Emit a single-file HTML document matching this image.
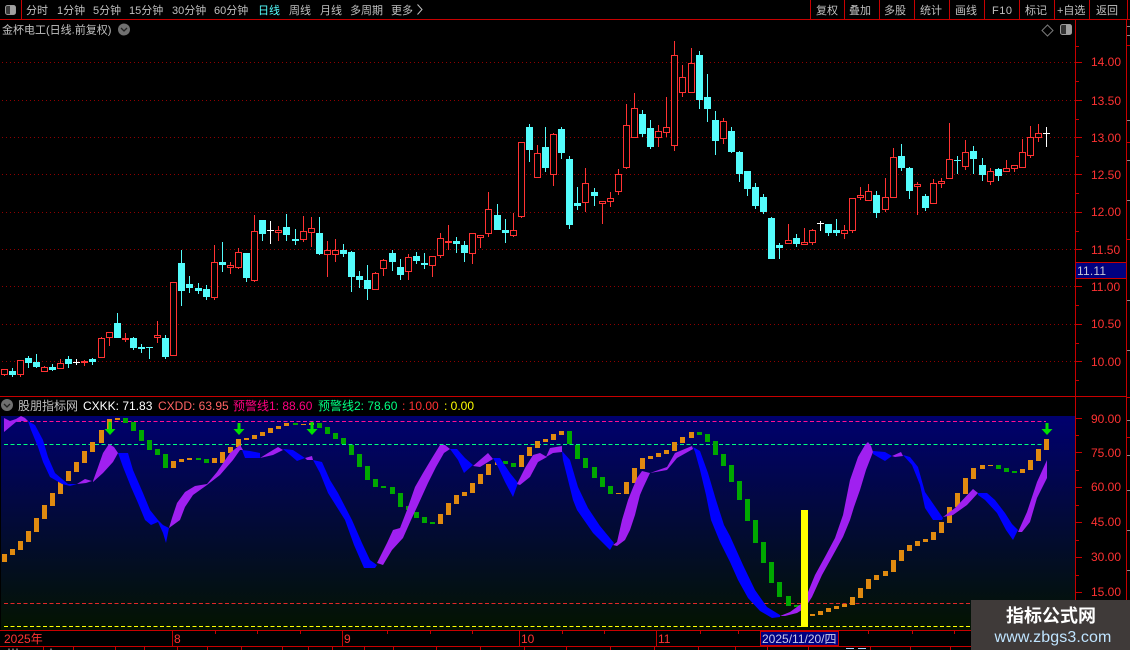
<!DOCTYPE html>
<html lang="zh">
<head>
<meta charset="utf-8">
<title>金杯电工</title>
<style>
html,body{margin:0;padding:0;background:#000;width:1130px;height:650px;overflow:hidden}
svg{display:block}
text{font-family:"Liberation Sans","WenQuanYi Zen Hei","Noto Sans CJK SC",sans-serif;font-size:12px}
.g{fill:#c0c0c0}
.t text{font-size:11px}
.r{fill:#ff3232}
</style>
</head>
<body>
<svg width="1130" height="650" viewBox="0 0 1130 650" xmlns="http://www.w3.org/2000/svg">
<defs>
<linearGradient id="bg" x1="0" y1="0" x2="0" y2="1"><stop offset="0" stop-color="#00006e"/><stop offset="1" stop-color="#041400"/></linearGradient>
</defs>
<rect width="1130" height="650" fill="#000"/>

<!-- top bar -->
<g class="g t">
<text x="26" y="14">分时</text>
<text x="57" y="14">1分钟</text>
<text x="93" y="14">5分钟</text>
<text x="129" y="14">15分钟</text>
<text x="172" y="14">30分钟</text>
<text x="214" y="14">60分钟</text>
<text x="258" y="14" style="fill:#54fcfc">日线</text>
<text x="289" y="14">周线</text>
<text x="320" y="14">月线</text>
<text x="350" y="14">多周期</text>
<text x="391" y="14">更多</text>
<text x="816" y="14">复权</text>
<text x="849" y="14">叠加</text>
<text x="884" y="14">多股</text>
<text x="920" y="14">统计</text>
<text x="955" y="14">画线</text>
<text x="992" y="14" style="letter-spacing:.5px">F10</text>
<text x="1025" y="14">标记</text>
<text x="1057" y="14">+自选</text>
<text x="1096" y="14">返回</text>
<text x="2" y="33.5">金杯电工(日线.前复权)</text>
</g>
<path d="M417.5 4.5L422 9.5L417.5 14.5" fill="none" stroke="#c0c0c0"/>
<g fill="none" stroke="#c80000">
<path d="M21.5 0V19M810.5 0V19M844.5 0V19M879.5 0V19M914.5 0V19M949.5 0V19M984.5 0V19M1019.5 0V19M1054.5 0V19M1089.5 0V19M1127.5 0V19"/>
<path d="M0 19.5H1130M0 396.5H1127M0 630.5H1076M0 646.5H1130"/>
<path d="M1075.5 20V650M1126.5 20V650"/>
<path d="M172.5 631V646M342.5 631V646M519.5 631V646M656.5 631V646"/>
</g>
<!-- layout icons -->
<rect x="5.5" y="5.5" width="10" height="9" rx="2" fill="#3a3a3a" stroke="#9a9a9a"/>
<rect x="10" y="6" width="5" height="8" fill="#a0a0a0"/>
<rect x="1060.5" y="24.5" width="11" height="10" rx="2" fill="#333" stroke="#9a9a9a"/>
<rect x="1066" y="25" width="5" height="9" fill="#a0a0a0"/>
<circle cx="124" cy="29.5" r="6" fill="#707070"/>
<path d="M121 28l3 3 3-3" fill="none" stroke="#222" stroke-width="1.3"/>
<path d="M1047.5 25L1053 30.5L1047.5 36L1042 30.5Z" fill="none" stroke="#7a7a7a"/>

<!-- price grid -->
<g stroke="#900000" stroke-dasharray="1 3" fill="none">
<path d="M2 62.5H1075M2 100.5H1075M2 137.5H1075M2 174.5H1075M2 212.5H1075M2 249.5H1075M2 286.5H1075M2 324.5H1075M2 361.5H1075"/>
</g>

<!-- candles: red wicks -->
<path fill="none" stroke="#ff3232" d="M4.5 369V376M20.5 360V377M44.5 366V372M60.5 359V368M84.5 360V366M101.5 337V357M109.5 332V346M125.5 333V342M157.5 321V343M173.5 282V355M214.5 245V300M230.5 262V274M238.5 248V269M254.5 215V282M278.5 226V241M303.5 216V242M311.5 217V247M327.5 241V277M335.5 239V262M375.5 272V289M383.5 259V276M408.5 254V280M432.5 256V277M440.5 233V258M448.5 225V250M472.5 233V264M480.5 235V248M488.5 192V237M513.5 213V237M521.5 142V218M537.5 145V177M553.5 133V186M585.5 168V212M602.5 201V224M610.5 192V207M618.5 169V195M626.5 104V169M634.5 93V137M658.5 125V147M666.5 97V137M674.5 41V151M682.5 65V97M691.5 48V92M723.5 118V144M788.5 224V243M804.5 228V244M812.5 229V245M844.5 225V239M852.5 198V233M860.5 187V200M868.5 184V200M885.5 178V212M893.5 148V197M917.5 182V215M933.5 179V203M941.5 178V188M949.5 123V178M965.5 140V170M990.5 168V185M1006.5 160V171M1014.5 165V172M1022.5 139V167M1030.5 126V158M1038.5 124V142"/>
<!-- candles: red bodies -->
<path fill="#000" stroke="#ff3232" d="M1.5 369.5h6V374.5h-6zM17.5 360.5h6V374.5h-6zM41.5 367.5h6V371.5h-6zM57.5 363.5h6V368.5h-6zM98.5 338.5h6V357.5h-6zM106.5 332.5h6V337.5h-6zM154.5 335.5h6V337.5h-6zM170.5 282.5h6V355.5h-6zM211.5 262.5h6V297.5h-6zM227.5 265.5h6V267.5h-6zM235.5 252.5h6V267.5h-6zM251.5 231.5h6V280.5h-6zM275.5 230.5h6V232.5h-6zM300.5 231.5h6V239.5h-6zM308.5 228.5h6V232.5h-6zM324.5 250.5h6V254.5h-6zM332.5 250.5h6V254.5h-6zM372.5 273.5h6V289.5h-6zM380.5 260.5h6V268.5h-6zM405.5 257.5h6V271.5h-6zM429.5 256.5h6V265.5h-6zM437.5 238.5h6V255.5h-6zM469.5 233.5h6V253.5h-6zM477.5 235.5h6V237.5h-6zM485.5 209.5h6V233.5h-6zM510.5 230.5h6V235.5h-6zM518.5 142.5h6V216.5h-6zM534.5 153.5h6V177.5h-6zM550.5 134.5h6V174.5h-6zM582.5 183.5h6V202.5h-6zM599.5 201.5h6V203.5h-6zM607.5 198.5h6V201.5h-6zM615.5 174.5h6V191.5h-6zM623.5 125.5h6V167.5h-6zM631.5 108.5h6V137.5h-6zM655.5 131.5h6V137.5h-6zM663.5 127.5h6V132.5h-6zM671.5 55.5h6V145.5h-6zM679.5 77.5h6V92.5h-6zM688.5 63.5h6V92.5h-6zM720.5 121.5h6V138.5h-6zM785.5 240.5h6V243.5h-6zM801.5 242.5h6V244.5h-6zM809.5 230.5h6V242.5h-6zM841.5 230.5h6V233.5h-6zM849.5 198.5h6V230.5h-6zM857.5 195.5h6V197.5h-6zM865.5 191.5h6V200.5h-6zM882.5 197.5h6V209.5h-6zM890.5 157.5h6V197.5h-6zM914.5 184.5h6V186.5h-6zM930.5 183.5h6V203.5h-6zM938.5 181.5h6V183.5h-6zM946.5 159.5h6V178.5h-6zM962.5 152.5h6V166.5h-6zM987.5 171.5h6V181.5h-6zM1003.5 168.5h6V171.5h-6zM1011.5 165.5h6V168.5h-6zM1019.5 152.5h6V167.5h-6zM1027.5 137.5h6V155.5h-6zM1035.5 133.5h6V137.5h-6z"/>
<path fill="none" stroke="#ff3232" stroke-width="7" d="M84.5 361V363M125.5 338V340M448.5 241V243"/>
<!-- candles: cyan wicks -->
<path fill="none" stroke="#54fcfc" d="M12.5 368V377M28.5 356V368M36.5 354V368M52.5 364V371M68.5 356V368M92.5 358V365M117.5 313V338M133.5 337V350M141.5 344V353M149.5 347V359M165.5 335V359M181.5 250V306M189.5 276V293M198.5 283V294M206.5 285V300M222.5 242V272M246.5 253V282M262.5 220V241M286.5 214V241M295.5 229V245M319.5 217V255M343.5 244V257M351.5 251V292M359.5 271V288M367.5 265V300M392.5 250V271M400.5 259V280M416.5 252V264M424.5 253V269M456.5 237V253M464.5 241V262M497.5 204V230M505.5 219V243M529.5 124V162M545.5 127V172M561.5 127V159M569.5 156V229M577.5 187V210M594.5 188V206M642.5 110V137M650.5 120V149M699.5 51V109M707.5 74V122M715.5 111V155M731.5 127V153M739.5 151V182M747.5 171V196M755.5 183V209M763.5 194V214M771.5 217V259M779.5 243V259M796.5 234V247M828.5 224V236M836.5 219V236M876.5 191V218M901.5 144V171M909.5 167V199M925.5 194V211M957.5 156V174M973.5 146V174M982.5 158V181M998.5 168V181"/>
<!-- candles: cyan bodies -->
<path fill="none" stroke="#54fcfc" stroke-width="7" d="M12.5 371V375M28.5 358V363M36.5 362V367M52.5 367V370M68.5 359V364M92.5 359V362M117.5 323V338M133.5 338V348M141.5 347V349M149.5 347V348M165.5 338V357M181.5 263V291M189.5 284V288M198.5 288V291M206.5 289V297M222.5 262V265M246.5 253V278M262.5 220V234M286.5 227V235M295.5 239V241M319.5 233V254M343.5 250V254M351.5 252V277M359.5 276V280M367.5 280V289M392.5 253V262M400.5 267V275M416.5 256V261M424.5 263V265M456.5 241V244M464.5 245V253M497.5 215V230M505.5 230V233M529.5 127V150M545.5 147V168M561.5 129V153M569.5 159V225M577.5 203V206M594.5 192V196M642.5 114V134M650.5 128V147M699.5 55V100M707.5 97V109M715.5 120V141M731.5 131V152M739.5 152V174M747.5 171V189M755.5 187V206M763.5 197V212M771.5 218V259M779.5 245V248M796.5 238V244M828.5 224V233M836.5 230V233M876.5 195V213M901.5 156V168M909.5 168V191M925.5 196V208M957.5 160V161M973.5 151V159M982.5 165V175M998.5 169V176"/>
<!-- candles: white doji -->
<path fill="none" stroke="#fff" d="M76.5 359V365M73 362.5H80M270.5 221V244M267 230.5H274M820.5 221V231M817 223.5H824M1046.5 127V147M1043 133.5H1050"/>

<!-- price axis -->
<g fill="none" stroke="#c80000">
<path d="M1076 62.5H1082M1076 100.5H1082M1076 137.5H1082M1076 174.5H1082M1076 212.5H1082M1076 249.5H1082M1076 286.5H1082M1076 324.5H1082M1076 361.5H1082"/>
<path d="M1076 81.5H1079M1076 119.5H1079M1076 156.5H1079M1076 193.5H1079M1076 231.5H1079M1076 305.5H1079M1076 343.5H1079M1076 380.5H1079M1076 46.5H1079"/>
<path d="M1127 45.5H1130M1127 142.5H1130M1127 239.5H1130M1127 397.5H1130M1127 437.5H1130"/>
</g>
<path fill="none" stroke="#8a8a8a" d="M1127 26.5H1130M1127 35.5H1130M1127 120.5H1130M1127 160.5H1130M1127 200.5H1130M1127 300.5H1130M1127 350.5H1130M1127 420.5H1130M1127 455.5H1130M1127 490.5H1130M1127 530.5H1130M1127 570.5H1130"/>
<g class="r">
<text x="1091" y="66">14.00</text>
<text x="1091" y="105">13.50</text>
<text x="1091" y="142">13.00</text>
<text x="1091" y="179">12.50</text>
<text x="1091" y="216">12.00</text>
<text x="1091" y="254">11.50</text>
<text x="1091" y="291">11.00</text>
<text x="1091" y="328">10.50</text>
<text x="1091" y="366">10.00</text>
</g>
<rect x="1075.5" y="262.5" width="51" height="16" fill="#000080" stroke="#c80000"/>
<text x="1077" y="275" style="fill:#c8c8d8;letter-spacing:.2px">11.11</text>

<!-- indicator header -->
<circle cx="7" cy="405" r="6" fill="#707070"/>
<path d="M4 404l3 3 3-3" fill="none" stroke="#222" stroke-width="1.3"/>
<text x="18" y="410" class="g">股朋指标网</text>
<text x="83" y="410" style="fill:#fff">CXKK: 71.83</text>
<text x="158" y="410" style="fill:#ff6464">CXDD: 63.95</text>
<text x="233" y="410" style="fill:#ff0080">预警线1: 88.60</text>
<text x="318" y="410" style="fill:#00ff80">预警线2: 78.60</text>
<text x="402" y="410" style="fill:#ff3232">: 10.00</text>
<text x="444" y="410" style="fill:#ffff00">: 0.00</text>

<!-- indicator panel -->
<rect x="1" y="416" width="1074" height="214" fill="url(#bg)"/>
<g fill="none" stroke-dasharray="4 2.5">
<path stroke="#ff1090" d="M4 421.5H1046"/>
<path stroke="#00ff80" d="M4 444.5H1046"/>
<path stroke="#e02828" d="M4 603.5H1075"/>
<path stroke="#ffff00" d="M4 626.5H1075"/>
</g>

<!-- indicator bars -->
<path fill="none" stroke="#e08a10" stroke-width="5" d="M4.5 554V562M12.5 549V555M20.5 541V550M28.5 531V542M36.5 518V532M44.5 505V519M52.5 493V506M60.5 481V494M68.5 471V481M76.5 462V472M84.5 451V463M92.5 442V452M101.5 430V443M109.5 419V430M117.5 418V420M173.5 461V468M181.5 459V462M189.5 458V460M214.5 458V463M222.5 452V463M230.5 447V453M238.5 439V447M246.5 438V440M254.5 435V439M262.5 432V436M270.5 428V433M278.5 426V429M286.5 423V426M303.5 424V425M311.5 423V425M440.5 514V524M448.5 503V515M456.5 495V504M464.5 492V496M472.5 483V493M480.5 474V484M488.5 464V475M497.5 462V465M521.5 455V467M529.5 447V456M537.5 441V448M545.5 439V442M553.5 434V440M561.5 431V435M618.5 493V494M626.5 482V494M634.5 468V483M642.5 458V469M650.5 456V459M658.5 453V457M666.5 450V454M674.5 442V451M682.5 437V443M691.5 432V438M812.5 614V616M820.5 611V615M828.5 608V612M836.5 606V609M844.5 604V607M852.5 597V605M860.5 588V598M868.5 579V589M876.5 575V580M885.5 571V576M893.5 560V572M901.5 550V561M909.5 545V551M917.5 541V546M925.5 539V542M933.5 532V540M941.5 522V533M949.5 507V523M957.5 493V507M965.5 478V494M973.5 468V479M982.5 465V469M990.5 465V466M1022.5 469V473M1030.5 460V470M1038.5 449V461M1046.5 439V450"/>
<path fill="none" stroke="#00a800" stroke-width="5" d="M125.5 418V423M133.5 422V431M141.5 430V441M149.5 440V450M157.5 449V455M165.5 454V468M198.5 458V460M206.5 459V463M295.5 423V425M319.5 423V428M327.5 427V434M335.5 433V439M343.5 438V444M351.5 445V455M359.5 454V467M367.5 466V480M375.5 479V487M383.5 486V488M392.5 487V494M400.5 493V507M408.5 506V510M416.5 512V518M424.5 517V523M432.5 522V524M505.5 461V464M513.5 463V467M569.5 431V444M577.5 445V459M585.5 458V468M594.5 467V478M602.5 477V487M610.5 486V494M699.5 432V435M707.5 434V442M715.5 441V455M723.5 454V466M731.5 465V482M739.5 481V500M747.5 499V521M755.5 520V543M763.5 542V563M771.5 562V583M779.5 582V597M788.5 596V606M796.5 605V607M998.5 465V469M1006.5 468V472M1014.5 471V473"/>

<!-- ribbons: blue -->
<g fill="#0000ff">
<path d="M28 421L35 425L43 440L48 457L55 473L68 484L77 484L70 486L62 484L50 477L43 462L38 447L31 430Z"/>
<path d="M118 453L128 453L133 470L143 493L150 510L158 520L163 525L169 528L166 543L163 533L158 522L151 525L145 520L138 503L131 487L123 467Z"/>
<path d="M242 450L250 451L260 453L260 458L245 458Z"/>
<path d="M283 449L293 450L305 458L297 461L290 455Z"/>
<path d="M313 460L322 462L330 480L338 493L352 520L362 543L370 560L377 565L375 568L364 568L354 545L345 520L328 493L320 473Z"/>
<path d="M450 449L457 449L465 458L473 465L464 473L458 460Z"/>
<path d="M493 458L500 458L510 473L518 483L513 497L505 482L498 467Z"/>
<path d="M562 451L570 460L578 487L588 508L600 526L614 543L610 550L593 533L577 510L573 500L568 480L563 460Z"/>
<path d="M693 447L700 451L708 473L716 500L724 525L730 536L743 565L755 590L767 607L780 615L780 617L772 618L760 611L748 598L738 580L730 562L720 542L711 520L706 495L700 470L695 452Z"/>
<path d="M873 451L885 452L892 456L885 461L878 457L873 454Z"/>
<path d="M903 455L910 457L918 467L925 492L943 518L942 520L933 520L925 508L920 485L912 465Z"/>
<path d="M978 493L987 493L995 500L1005 513L1012 524L1018 530L1013 540L1006 530L997 513L985 500L978 495Z"/>
</g>
<!-- ribbons: purple -->
<g fill="#a020f0">
<path d="M4 418L10 421L16 419L21 416L25 418L28 421L22 421L16 422L4 432Z"/>
<path d="M77 484L85 479L92 481L86 483Z"/>
<path d="M93 481L97 470L103 453L109 444L114 447L118 453L113 462L103 473L93 482Z"/>
<path d="M169 528L172 518L177 503L185 492L195 486L207 484L217 472L230 453L240 445L243 450L240 450L233 460L220 475L207 485L193 495L185 507L180 520Z"/>
<path d="M260 458L268 453L278 447L283 450L273 455Z"/>
<path d="M305 458L312 456L313 460L307 460Z"/>
<path d="M377 563L387 543L393 530L400 528L407 510L415 487L423 473L432 458L440 445L445 445L450 449L444 453L436 467L428 483L418 505L411 520L403 538L392 550L383 565Z"/>
<path d="M473 466L488 453L493 459L480 467Z"/>
<path d="M517 484L525 468L533 455L540 453L547 457L538 462L530 477L520 485Z"/>
<path d="M546 457L550 448L562 446L562 452L553 453Z"/>
<path d="M613 545L617 542L622 520L628 500L632 490L637 478L642 471L650 473L643 488L640 495L635 515L630 530L625 540L617 546Z"/>
<path d="M650 473L667 467L675 453L692 446L693 449L677 458L667 470Z"/>
<path d="M780 616L790 612L801 604L808 592L815 575L826 555L835 538L843 515L850 480L858 457L865 445L868 442L871 446L873 452L866 470L860 490L854 507L850 520L843 537L832 557L822 575L812 597L805 608L797 613L785 616Z"/>
<path d="M892 456L901 452L903 456L895 457Z"/>
<path d="M943 517L955 508L973 489L978 493L967 505L953 515Z"/>
<path d="M1018 532L1027 512L1037 482L1047 460L1047 478L1037 498L1030 522L1022 532Z"/>
</g>

<!-- yellow bar -->
<rect x="801" y="510" width="7" height="117" fill="#ffff00"/>

<!-- arrows -->
<g fill="#00e000">
<path d="M108.5 422H111.5V429H115.5L110 435L104.5 429H108.5Z"/>
<path d="M237.5 423H240.5V429H244.5L239 435L233.5 429H237.5Z"/>
<path d="M310.5 422H313.5V429H317.5L312 435L306.5 429H310.5Z"/>
<path d="M1045.5 423H1048.5V429H1052.5L1047 435L1041.5 429H1045.5Z"/>
</g>

<!-- indicator axis -->
<g fill="none" stroke="#c80000">
<path d="M1076 418.5H1082M1076 452.5H1082M1076 487.5H1082M1076 522.5H1082M1076 557.5H1082M1076 592.5H1082"/>
<path d="M1076 435.5H1079M1076 470.5H1079M1076 505.5H1079M1076 540.5H1079M1076 575.5H1079M1076 610.5H1079"/>
</g>
<g class="r">
<text x="1091" y="423">90.00</text>
<text x="1091" y="457">75.00</text>
<text x="1091" y="491">60.00</text>
<text x="1091" y="526">45.00</text>
<text x="1091" y="561">30.00</text>
<text x="1091" y="596">15.00</text>
</g>

<!-- date axis -->
<g class="r">
<text x="4" y="643">2025年</text>
<text x="174" y="643">8</text>
<text x="344" y="643">9</text>
<text x="521" y="643">10</text>
<text x="658" y="643">11</text>
</g>
<path fill="none" stroke="#c80000" d="M215.5 631V634M257.5 631V634M300.5 631V634M387.5 631V634M430.5 631V634M472.5 631V634M562.5 631V634M604.5 631V634M700.5 631V634M738.5 631V634M868.5 631V634M912.5 631V634M954.5 631V634"/>
<path fill="none" stroke="#c80000" d="M43.5 647V650M73.5 647V650M115.5 647V650M144.5 647V650M177.5 647V650M207.5 647V650M241.5 647V650M282.5 647V650M308.5 647V650M332.5 647V650M364.5 647V650M393.5 647V650M436.5 647V650M480.5 647V650M524.5 647V650M566.5 647V650M610.5 647V650M654.5 647V650M698.5 647V650M735.5 647V650M767.5 647V650M808.5 647V650M870.5 647V650M910.5 647V650M950.5 647V650"/>
<path fill="none" stroke="#c8c8c8" d="M9 648.5V650M13 648.5V650M17 648.5V650M51 648.5V650"/>
<path fill="none" stroke="#a8d8ff" d="M846 648.5H854M858 648.5H866"/>
<rect x="760.5" y="631.5" width="78" height="14" fill="#000080" stroke="#c80000"/>
<text x="762" y="643" style="fill:#c8c8e8">2025/11/20/四</text>

<!-- watermark -->
<rect x="971" y="600" width="159" height="50" fill="#3f3a39"/>
<text x="1051" y="622" text-anchor="middle" style="fill:#fff;font-size:18px;font-weight:bold">指标公式网</text>
<text x="1053" y="642" text-anchor="middle" style="fill:#bfe4ff;font-size:16px;letter-spacing:.1px">www.zbgs3.com</text>
</svg>
</body>
</html>
